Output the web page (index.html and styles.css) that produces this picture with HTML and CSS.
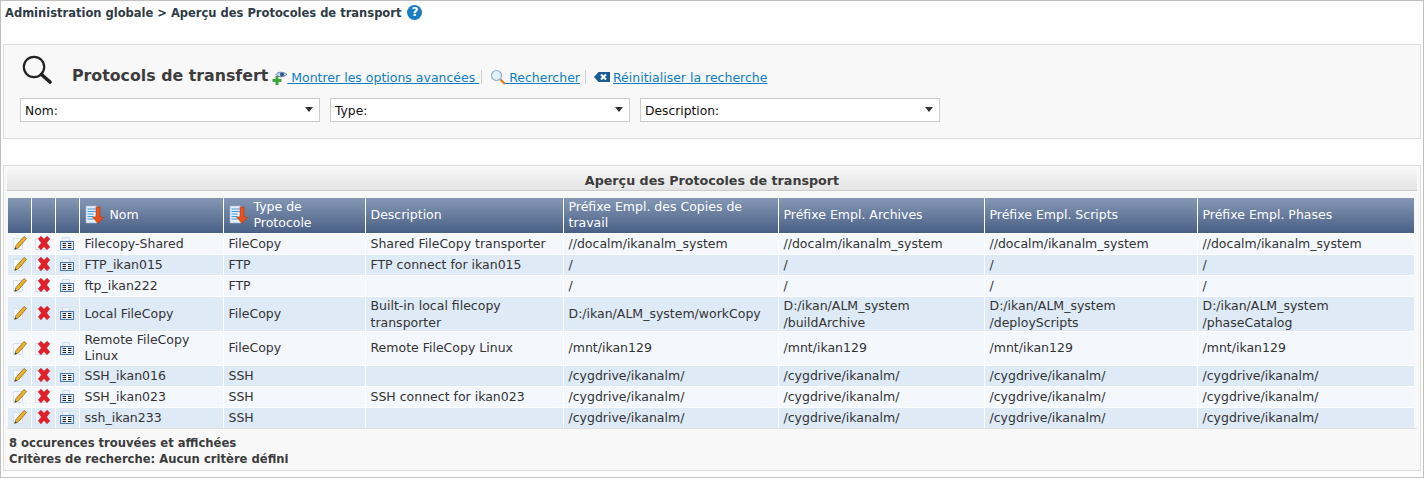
FILE: index.html

```html
<!DOCTYPE html>
<html lang="fr">
<head>
  <meta charset="UTF-8">
  <title>Aperçu des Protocoles de transport</title>
  <link rel="stylesheet" href="styles.css">
</head>
<body>

  <svg class="defs" width="0" height="0">
    <defs>
      <symbol id="i-edit" viewBox="0 0 16 16">
        <path d="M2.500 3.500h9v11h-9z" fill="#f6f9fd" stroke="#d5e0ee"/>
        <path d="M5 10.500 13 1.500 15.500 3.500 7.500 12.800 3.800 14.200z" fill="#eeb32c" stroke="#8a6a1e" stroke-width=".8"/>
        <path d="M4.300 12.500 3.500 14.500 5.800 13.700z" fill="#333"/>
      </symbol>
      <symbol id="i-del" viewBox="0 0 16 16">
        <path d="M.5 3.500h11v11H.5z" fill="#f6f9fd" stroke="#d5e0ee"/>
        <path d="M3.300 3.800 6 1.300 9 4.300 12 1.300 14.700 3.800 11.600 7.900 14.700 12 12 14.700 9 11.500 6 14.700 3.300 12 6.400 7.900z" fill="#e2202a" stroke="#c3161f" stroke-width=".6"/>
      </symbol>
      <symbol id="i-view" viewBox="0 0 16 16">
        <path d="M3.500 2.500h7v5h-7z" fill="#eef4fb" stroke="#cfdcec"/>
        <rect x="1.500" y="6.500" width="13" height="8" fill="#dbe8f7" stroke="#4d78ad"/>
        <path d="M3 8h4.500v5H3zM8.500 8H13v5H8.500z" fill="#fff"/>
        <path d="M3.500 8.500h3.500M3.500 10.500h3.500M3.500 12.500h3.500M9 8.500h3.500M9 10.500h3.500M9 12.500h3.500" stroke="#222" stroke-width="1"/>
      </symbol>
      <symbol id="i-sort" viewBox="0 0 20 20">
        <path d="M1 1h11v17H1z" fill="#e4eef8" stroke="#9db8d4" stroke-width=".6"/>
        <path d="M2.500 4h8M2.500 6.500h8M2.500 9h6M2.500 11.500h6M2.500 14h6" stroke="#3d9be0" stroke-width="1.200"/>
        <path d="M11 2h4v10h3.500L13 18.500 7.500 12H11z" fill="#e8521a" stroke="#b33c0e" stroke-width=".6"/>
      </symbol>
    </defs>
  </svg>

  <div class="page">
    <div class="breadcrumb">
      Administration globale &gt; Aperçu des Protocoles de transport
      <span class="help">?</span>
    </div>

    <div class="search-panel">
      <div class="search-head">
        <svg class="search-icon" viewBox="0 0 30 30">
          <circle cx="12" cy="12" r="10.200" fill="none" stroke="#222" stroke-width="2.200"/>
          <path d="M19.500 19.500 28 27" stroke="#222" stroke-width="3.600" stroke-linecap="round"/>
        </svg>
        <h2>Protocols de transfert</h2>
        <a class="action first" href="#">
          <svg class="action-icon" viewBox="0 0 16 16">
            <path d="M4 5.500C6 2.500 11 2.500 15 5.500 11 8.500 6 8.500 4 5.500z" fill="#c8d8ec" stroke="#5b80b0"/>
            <circle cx="10" cy="5.500" r="2" fill="#33588a"/>
            <path d="M3.500 7h3v3h3v3h-3v3h-3v-3H.5v-3h3z" fill="#3fa63a"/>
          </svg>
          <span> Montrer les options avancées </span>
        </a>
        <i class="sep"></i>
        <a class="action" href="#">
          <svg class="action-icon" viewBox="0 0 16 16">
            <circle cx="6.500" cy="6.500" r="5" fill="#e4f0fb" stroke="#8fb2d6" stroke-width="1.200"/>
            <path d="M10.500 10.500 15 15" stroke="#e9781f" stroke-width="2.200"/>
          </svg>
          <span> Rechercher</span>
        </a>
        <i class="sep sep-wide"></i>
        <a class="action" href="#">
          <svg class="action-icon wide" viewBox="0 0 16 12">
            <path d="M0 6 4.500 1H16v10H4.500z" fill="#1e5a92"/>
            <path d="M7 3.500 12 8.500M12 3.500 7 8.500" stroke="#fff" stroke-width="2"/>
          </svg>
          <span>Réinitialiser la recherche</span>
        </a>
      </div>
      <div class="filters">
        <div class="combo">Nom:</div>
        <div class="combo">Type:</div>
        <div class="combo">Description:</div>
      </div>
    </div>

    <div class="table-panel">
      <div class="table-title">Aperçu des Protocoles de transport</div>
      <table>
        <colgroup>
          <col class="c-icon"><col class="c-icon2"><col class="c-icon2">
          <col class="c-name"><col class="c-type"><col class="c-desc">
          <col class="c-copy"><col class="c-arch"><col class="c-scr"><col>
        </colgroup>
        <thead>
          <tr>
            <th></th><th></th><th></th>
            <th><div class="sort"><svg><use href="#i-sort"/></svg><span>Nom</span></div></th>
            <th><div class="sort"><svg><use href="#i-sort"/></svg><span>Type de<br>Protocole</span></div></th>
            <th>Description</th>
            <th>Préfixe Empl. des Copies de travail</th>
            <th>Préfixe Empl. Archives</th>
            <th>Préfixe Empl. Scripts</th>
            <th>Préfixe Empl. Phases</th>
          </tr>
        </thead>
        <tbody>
          <tr>
            <td class="ico"><svg><use href="#i-edit"/></svg></td><td class="ico"><svg><use href="#i-del"/></svg></td><td class="ico"><svg><use href="#i-view"/></svg></td>
            <td>Filecopy-Shared</td><td>FileCopy</td><td>Shared FileCopy transporter</td>
            <td>//docalm/ikanalm_system</td><td>//docalm/ikanalm_system</td><td>//docalm/ikanalm_system</td><td>//docalm/ikanalm_system</td>
          </tr>
          <tr class="alt">
            <td class="ico"><svg><use href="#i-edit"/></svg></td><td class="ico"><svg><use href="#i-del"/></svg></td><td class="ico"><svg><use href="#i-view"/></svg></td>
            <td>FTP_ikan015</td><td>FTP</td><td>FTP connect for ikan015</td>
            <td>/</td><td>/</td><td>/</td><td>/</td>
          </tr>
          <tr>
            <td class="ico"><svg><use href="#i-edit"/></svg></td><td class="ico"><svg><use href="#i-del"/></svg></td><td class="ico"><svg><use href="#i-view"/></svg></td>
            <td>ftp_ikan222</td><td>FTP</td><td></td>
            <td>/</td><td>/</td><td>/</td><td>/</td>
          </tr>
          <tr class="alt">
            <td class="ico"><svg><use href="#i-edit"/></svg></td><td class="ico"><svg><use href="#i-del"/></svg></td><td class="ico"><svg><use href="#i-view"/></svg></td>
            <td>Local FileCopy</td><td>FileCopy</td><td>Built-in local filecopy transporter</td>
            <td>D:/ikan/ALM_system/workCopy</td><td>D:/ikan/ALM_system<br>/buildArchive</td><td>D:/ikan/ALM_system<br>/deployScripts</td><td>D:/ikan/ALM_system<br>/phaseCatalog</td>
          </tr>
          <tr class="compact">
            <td class="ico"><svg><use href="#i-edit"/></svg></td><td class="ico"><svg><use href="#i-del"/></svg></td><td class="ico"><svg><use href="#i-view"/></svg></td>
            <td>Remote FileCopy Linux</td><td>FileCopy</td><td>Remote FileCopy Linux</td>
            <td>/mnt/ikan129</td><td>/mnt/ikan129</td><td>/mnt/ikan129</td><td>/mnt/ikan129</td>
          </tr>
          <tr class="alt">
            <td class="ico"><svg><use href="#i-edit"/></svg></td><td class="ico"><svg><use href="#i-del"/></svg></td><td class="ico"><svg><use href="#i-view"/></svg></td>
            <td>SSH_ikan016</td><td>SSH</td><td></td>
            <td>/cygdrive/ikanalm/</td><td>/cygdrive/ikanalm/</td><td>/cygdrive/ikanalm/</td><td>/cygdrive/ikanalm/</td>
          </tr>
          <tr>
            <td class="ico"><svg><use href="#i-edit"/></svg></td><td class="ico"><svg><use href="#i-del"/></svg></td><td class="ico"><svg><use href="#i-view"/></svg></td>
            <td>SSH_ikan023</td><td>SSH</td><td>SSH connect for ikan023</td>
            <td>/cygdrive/ikanalm/</td><td>/cygdrive/ikanalm/</td><td>/cygdrive/ikanalm/</td><td>/cygdrive/ikanalm/</td>
          </tr>
          <tr class="alt">
            <td class="ico"><svg><use href="#i-edit"/></svg></td><td class="ico"><svg><use href="#i-del"/></svg></td><td class="ico"><svg><use href="#i-view"/></svg></td>
            <td>ssh_ikan233</td><td>SSH</td><td></td>
            <td>/cygdrive/ikanalm/</td><td>/cygdrive/ikanalm/</td><td>/cygdrive/ikanalm/</td><td>/cygdrive/ikanalm/</td>
          </tr>
        </tbody>
      </table>
      <div class="table-foot">
        <div>8 occurences trouvées et affichées</div>
        <div>Critères de recherche: Aucun critère défini</div>
      </div>
    </div>
  </div>

</body>
</html>
```

FILE: styles.css

```css
* {
  box-sizing: border-box;
}

body {
  margin: 0;
  font-family: "DejaVu Sans", Verdana, sans-serif;
  font-size: 12.5px;
  color: #333;
  background-color: #fff;
}

.defs {
  position: absolute;
}

.page {
  height: 478px;
  border: 1px solid #c0c0c0;
  padding: 0 2px;
  overflow: hidden;
}

.breadcrumb {
  display: flex;
  align-items: center;
  height: 23px;
  padding-left: 2px;
  font-size: 11.5px;
  font-weight: bold;
  color: #2f3b45;
}

.help {
  width: 15px;
  height: 15px;
  margin-left: 6px;
  border-radius: 50%;
  background-color: #1b7cc4;
  color: #fff;
  font-size: 12px;
  line-height: 15px;
  text-align: center;
}

.search-panel {
  height: 95px;
  margin-top: 20px;
  padding: 11px 16px 0;
  background-color: #f8f8f8;
  border: 1px solid #dcdcdc;
}

.search-head {
  display: flex;
  align-items: flex-end;
  height: 33px;
  padding-bottom: 4px;
}

.search-icon {
  width: 30px;
  height: 30px;
  margin: 0 20px 0 2px;
}

.search-head h2 {
  margin: 0;
  font-size: 15.800px;
  line-height: 18px;
  color: #3c3c3c;
}

.action {
  display: flex;
  align-items: center;
  height: 16px;
  font-size: 12.500px;
  color: #0f7dc2;
  text-decoration: underline;
  white-space: pre;
}

.action.first {
  margin-left: 4px;
}

.sep {
  width: 1px;
  height: 14px;
  margin: 0 8px 1px 2px;
  background-color: #d0d0d0;
}

.sep-wide {
  margin-left: 5px;
}

.action-icon {
  width: 16px;
  height: 16px;
  flex: none;
  margin-right: -1px;
}

.action-icon.wide {
  height: 12px;
  margin-right: 3px;
}

.filters {
  display: flex;
  gap: 10px;
  margin-top: 9px;
}

.combo {
  position: relative;
  width: 300px;
  height: 24px;
  padding-left: 4px;
  background-color: #fff;
  border: 1px solid #ccc;
  color: #111;
  font-size: 12.300px;
  line-height: 24px;
}

.combo::after {
  content: "";
  position: absolute;
  top: 8px;
  right: 6px;
  border-left: 4px solid transparent;
  border-right: 4px solid transparent;
  border-top: 5px solid #333;
}

.table-panel {
  height: 306px;
  margin-top: 26px;
  padding: 3px;
  background-color: #f8f8f8;
  border: 1px solid #dcdcdc;
}

.table-title {
  height: 22px;
  margin-bottom: 7px;
  background: linear-gradient(#f6f6f6, #e4e4e4);
  border-bottom: 1px solid #ccc;
  font-size: 12.700px;
  font-weight: bold;
  line-height: 24px;
  text-align: center;
  color: #3c3c3c;
}

table {
  width: 1406px;
  margin-left: 1px;
  table-layout: fixed;
  border-collapse: collapse;
}

.c-icon { width: 23px; }
.c-icon2 { width: 24px; }
.c-name { width: 144px; }
.c-type { width: 142px; }
.c-desc { width: 198px; }
.c-copy { width: 215px; }
.c-arch { width: 206px; }
.c-scr { width: 213px; }

th {
  height: 35px;
  padding: 0 5px;
  background: linear-gradient(#8497b4, #4a5f85);
  border-left: 1px solid #fff;
  color: #fff;
  font-size: 12.500px;
  font-weight: normal;
  line-height: 16px;
  text-align: left;
}

th:first-child {
  border-left: none;
}

.sort {
  display: flex;
  align-items: center;
}

.sort svg {
  width: 20px;
  height: 20px;
  flex: none;
  margin-right: 5px;
}

td {
  height: 21px;
  padding: 0 5px;
  background-color: #f4f8fd;
  border-top: 1px solid #fff;
  border-left: 1px solid #fff;
  line-height: 17px;
  color: #333;
}

td:first-child {
  border-left: none;
}

.alt td {
  background-color: #deeaf6;
}

.compact td {
  line-height: 16.500px;
}

td.ico {
  padding: 0 0 1px 3px;
}

.ico svg {
  display: block;
  width: 16px;
  height: 16px;
}

.table-foot {
  padding-top: 6px;
  padding-left: 2px;
  border-top: 1px solid #e0e0e0;
  font-size: 11.600px;
  font-weight: bold;
  line-height: 16px;
  color: #3c3c3c;
}
```
